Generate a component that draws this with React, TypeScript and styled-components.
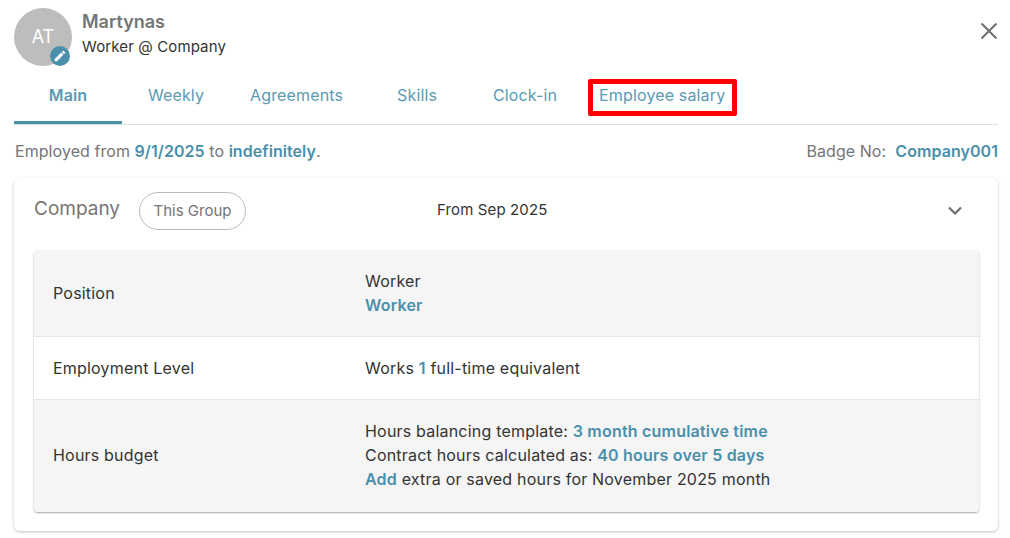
import React from 'react';
import styled, { createGlobalStyle } from 'styled-components';

const GlobalStyle = createGlobalStyle`
  html, body {
    margin: 0;
    padding: 0;
    background: #fff;
    font-family: Inter, "Liberation Sans", sans-serif;
  }
`;

const tabs = ['Main', 'Weekly', 'Agreements', 'Skills', 'Clock-in', 'Employee salary'];

export default function App(): JSX.Element {
  return (
    <Modal>
      <GlobalStyle />
      <Header>
        <Avatar>
          AT
          <EditBadge>
            <svg width="14" height="14" viewBox="0 0 24 24" fill="#fff">
              <path d="M3 17.25V21h3.75L17.81 9.94l-3.75-3.75L3 17.25zM20.71 7.04a1 1 0 0 0 0-1.41l-2.34-2.34a1 1 0 0 0-1.41 0l-1.83 1.83 3.75 3.75 1.83-1.83z" />
            </svg>
          </EditBadge>
        </Avatar>
        <Person>
          <Name>Martynas</Name>
          <Role>Worker @ Company</Role>
        </Person>
        <Close aria-label="Close">
          <svg width="18" height="18" viewBox="0 0 18 18" stroke="#6f6f6f" strokeWidth="2" fill="none">
            <path d="M1.5 1.5 16.5 16.5M16.5 1.5 1.5 16.5" />
          </svg>
        </Close>
      </Header>

      <Tabs>
        {tabs.map((t, i) => (
          <Tab key={t} $active={i === 0}>
            {t}
            {t === 'Employee salary' && <Highlight />}
          </Tab>
        ))}
      </Tabs>

      <InfoLine>
        <span>
          Employed from <Link>9/1/2025</Link> to <Link>indefinitely</Link>.
        </span>
        <span>
          Badge No:&nbsp; <Link>Company001</Link>
        </span>
      </InfoLine>

      <Card>
        <CardHeader>
          <CompanyName>Company</CompanyName>
          <GroupPill>This Group</GroupPill>
          <FromDate>From Sep 2025</FromDate>
          <Chevron>
            <svg width="14" height="9" viewBox="0 0 14 9" stroke="#6f6f6f" strokeWidth="2.2" fill="none">
              <path d="M1 1.5 7 7.5 13 1.5" />
            </svg>
          </Chevron>
        </CardHeader>

        <Table>
          <Row $shaded $height={87}>
            <Label>Position</Label>
            <Value>
              <div>Worker</div>
              <Link>Worker</Link>
            </Value>
          </Row>
          <Row $height={63}>
            <Label>Employment Level</Label>
            <Value>
              Works <Link>1</Link> full-time equivalent
            </Value>
          </Row>
          <Row $shaded $height={112}>
            <Label>Hours budget</Label>
            <Value>
              <div>Hours balancing template: <Link>3 month cumulative time</Link></div>
              <div>Contract hours calculated as: <Link>40 hours over 5 days</Link></div>
              <div><Link>Add</Link> extra or saved hours for November 2025 month</div>
            </Value>
          </Row>
        </Table>
      </Card>
    </Modal>
  );
}

const Modal = styled.div`
  width: 984px;
  height: 530px;
  padding: 8px 12px 0 14px;
  overflow: hidden;
  color: #333;
`;

const Header = styled.div`
  display: flex;
  height: 58px;
`;

const Avatar = styled.div`
  position: relative;
  width: 58px;
  height: 58px;
  border-radius: 50%;
  background: #bdbdbd;
  color: #fff;
  font-size: 18px;
  display: flex;
  align-items: center;
  justify-content: center;
  padding: 0 0 2px 0;
  box-sizing: border-box;
`;

const EditBadge = styled.div`
  position: absolute;
  right: 2px;
  bottom: 0;
  width: 20px;
  height: 20px;
  border-radius: 50%;
  background: #4a90ab;
  display: flex;
  align-items: center;
  justify-content: center;
`;

const Person = styled.div`
  margin-left: 10px;
  display: flex;
  flex-direction: column;
`;

const Name = styled.div`
  font-size: 18px;
  font-weight: 600;
  color: #757575;
  line-height: 28px;
`;

const Role = styled.div`
  font-size: 15px;
  letter-spacing: 0.12px;
  color: #333;
  line-height: 22px;
`;

const Close = styled.div`
  margin-left: auto;
  margin-top: 14px;
  height: 18px;
`;

const Tabs = styled.div`
  display: flex;
  height: 58px;
  border-bottom: 1px solid #e0e0e0;
`;

const Tab = styled.div<{ $active?: boolean }>`
  position: relative;
  min-width: 108px;
  padding: 0 20px;
  box-sizing: border-box;
  text-align: center;
  font-size: 16px;
  letter-spacing: 0.15px;
  line-height: 58px;
  height: 58px;
  color: #5a9ab3;
  font-weight: ${(p) => (p.$active ? 600 : 400)};
  border-bottom: ${(p) => (p.$active ? '3px solid #4a90ab' : 'none')};
`;

const Highlight = styled.div`
  position: absolute;
  left: 9px;
  right: 8px;
  top: 13px;
  height: 27px;
  border: 5px solid #ff0000;
  border-radius: 2px;
`;

const InfoLine = styled.div`
  display: flex;
  justify-content: space-between;
  height: 53px;
  line-height: 52px;
  font-size: 16px;
  letter-spacing: 0.06px;
  color: #757575;
  margin-left: 1px;
`;

const Link = styled.span`
  color: #4a90ab;
  font-weight: 600;
`;

const Card = styled.div`
  height: 353px;
  border-radius: 6px;
  box-shadow: 0 1px 3px rgba(0, 0, 0, 0.25);
  padding: 0 19px 0 20px;
`;

const CardHeader = styled.div`
  display: flex;
  align-items: center;
  height: 72px;
  box-sizing: border-box;
  padding-bottom: 6px;
`;

const CompanyName = styled.div`
  font-size: 19px;
  color: #757575;
  margin: -6px 0 0 0;
`;

const GroupPill = styled.div`
  margin-left: 19px;
  width: 107px;
  height: 38px;
  box-sizing: border-box;
  border: 1px solid #bdbdbd;
  border-radius: 19px;
  display: flex;
  align-items: center;
  justify-content: center;
  font-size: 15px;
  color: #757575;
  padding-bottom: 2px;
`;

const FromDate = styled.div`
  margin: -3px 0 0 191px;
  font-size: 15px;
  letter-spacing: 0.12px;
  color: #333;
`;

const Chevron = styled.div`
  margin: -2px 17px 0 auto;
  line-height: 0;
`;

const Table = styled.div`
  border-radius: 4px;
  overflow: hidden;
  box-shadow: 0 1px 2px rgba(0, 0, 0, 0.35);
`;

const Row = styled.div<{ $shaded?: boolean; $height: number }>`
  display: flex;
  align-items: center;
  height: ${(p) => p.$height}px;
  background: ${(p) => (p.$shaded ? '#f5f5f5' : '#fff')};
  border-bottom: 1px solid #e6e6e6;
  box-sizing: border-box;
  padding-left: 19px;
  font-size: 16px;
  letter-spacing: 0.2px;
  line-height: 24px;
  color: #333;
  &:last-child {
    border-bottom: none;
    padding-bottom: 2px;
  }
`;

const Label = styled.div`
  width: 312px;
`;

const Value = styled.div``;
